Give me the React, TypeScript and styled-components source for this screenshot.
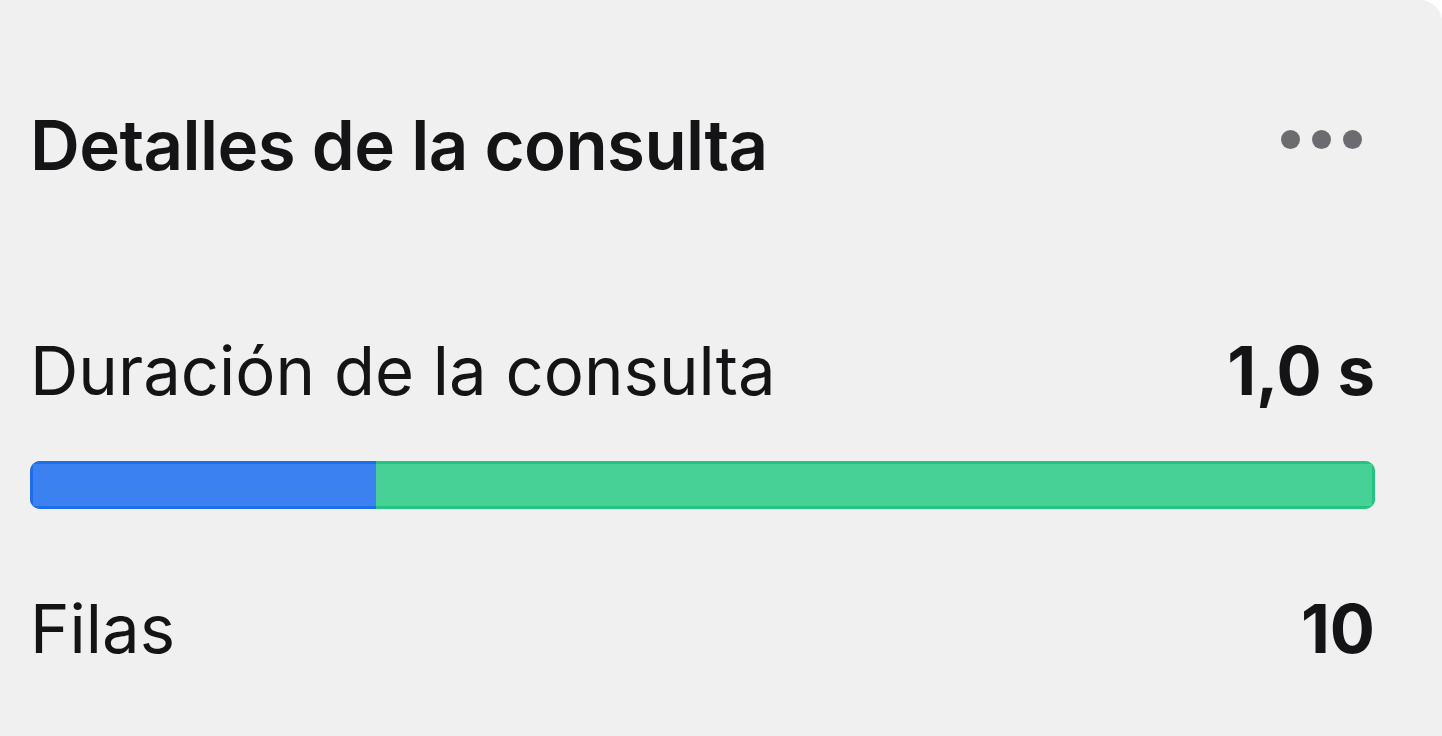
import React from "react";
import styled, { createGlobalStyle } from "styled-components";

const Global = createGlobalStyle`
  html, body { margin: 0; padding: 0; background: #ffffff; }
  body { font-family: Inter, "Noto Sans", sans-serif; -webkit-font-smoothing: antialiased; }
`;

const Card = styled.section`
  box-sizing: border-box;
  width: 1442px;
  height: 736px;
  background: #f0f0f0;
  border-top-right-radius: 22px;
  padding: 0 67px 0 30px;
  display: flex;
  flex-direction: column;
  color: #141416;
`;

const Header = styled.div`
  display: flex;
  align-items: center;
  justify-content: space-between;
  height: 90px;
  margin-top: 100px;
`;

const Title = styled.h2`
  margin: 0;
  font-size: 69px;
  font-weight: 600;
  letter-spacing: -0.6px;
  line-height: 1;
`;

const MoreButton = styled.button`
  display: flex;
  gap: 12px;
  padding: 0;
  margin-right: 13px;
  margin-top: -12px;
  background: none;
  border: none;
`;

const Dot = styled.span`
  width: 19px;
  height: 19px;
  border-radius: 50%;
  background: #6c6c70;
`;

const Row = styled.div<{ $top: number }>`
  display: flex;
  justify-content: space-between;
  align-items: center;
  margin-top: ${(p) => p.$top}px;
  font-size: 67px;
  line-height: 1;
`;

const Label = styled.span`
  font-weight: 400;
`;

const Value = styled.span`
  font-weight: 700;
`;

const Bar = styled.div`
  display: flex;
  height: 48px;
  margin-top: 57px;
  border-radius: 10px;
  overflow: hidden;
`;

const Segment = styled.div<{ $fill: string; $edge: string }>`
  box-sizing: border-box;
  background: ${(p) => p.$fill};
  border: 3px solid ${(p) => p.$edge};
`;

export default function App() {
  return (
    <>
      <Global />
      <Card>
        <Header>
          <Title>Detalles de la consulta</Title>
          <MoreButton aria-label="Más opciones">
            <Dot />
            <Dot />
            <Dot />
          </MoreButton>
        </Header>
        <Row $top={147}>
          <Label>Duración de la consulta</Label>
          <Value>1,0 s</Value>
        </Row>
        <Bar>
          <Segment $fill="#3b82f0" $edge="#1e6ee9" style={{ width: "25.7%", borderRight: "none" }} />
          <Segment $fill="#48d197" $edge="#22c47f" style={{ flex: 1, borderLeft: "none" }} />
        </Bar>
        <Row $top={86}>
          <Label>Filas</Label>
          <Value>10</Value>
        </Row>
      </Card>
    </>
  );
}
